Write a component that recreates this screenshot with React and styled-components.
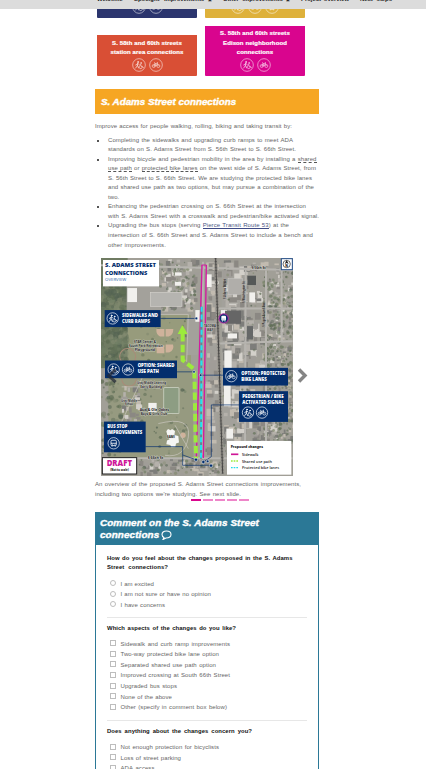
import React from "react";
import styled, { createGlobalStyle } from "styled-components";

const Global = createGlobalStyle`
  * { box-sizing: border-box; }
  html, body { margin: 0; padding: 0; background: #fff; overflow: hidden; }
  body { font-family: "Liberation Sans", Arial, sans-serif; font-size: 6px; color: #666; }
`;

const Page = styled.div`
  width: 426px;
  height: 769px;
  overflow: hidden;
`;

const NavBar = styled.nav`
  height: 9px;
  background: #dcdcdc;
  display: flex;
  gap: 11px;
  padding-left: 97px;
  overflow: hidden;
`;

const NavItem = styled.span`
  flex: none;
  width: ${(p) => p.$w}px;
  height: 8px;
  margin-top: -5px;
  font: 700 5.9px/8px "Liberation Sans", Arial, sans-serif;
  color: #222;
  white-space: nowrap;
  text-align: justify;
  text-align-last: justify;
`;

const NavMark = styled.span`
  font-size: 4px;
  font-weight: 400;
`;

const Cards = styled.div`
  margin-left: 97px;
  width: 208px;
  display: grid;
  grid-template-columns: 100px 100px;
  column-gap: 8px;
  row-gap: 8px;
  grid-template-rows: 9px 50px;
  align-items: end;
`;

const Card = styled.div`
  height: ${(p) => p.$h}px;
  background: ${(p) => p.$bg};
  border-radius: 0 0 1px 1px;
  display: flex;
  flex-direction: column;
  align-items: center;
  justify-content: flex-end;
  padding-bottom: 4px;
  overflow: hidden;
`;

const CardTitle = styled.div`
  color: #fff;
  font: 700 6px/9.6px "Liberation Sans", Arial, sans-serif;
  letter-spacing: 0.1px;
  -webkit-text-stroke: 0.2px #fff;
  text-align: center;
  white-space: pre;
`;

const IconRow = styled.div`
  display: flex;
  gap: 3px;
  height: 14px;
`;

const Main = styled.main`
  margin: 13px 0 0 95px;
  width: 224px;
`;

const Heading = styled.h2`
  margin: 0;
  height: 25px;
  padding-left: 6px;
  background: #f6a623;
  color: #fff;
  font: italic 700 9.8px/26px "Liberation Sans", Arial, sans-serif;
  -webkit-text-stroke: 0.4px #fff;
`;

const Line = styled.div`
  width: ${(p) => p.$w}px;
  height: ${(p) => p.$h ?? 9.55}px;
  line-height: ${(p) => p.$h ?? 9.55}px;
  letter-spacing: ${(p) => p.$ls ?? 0.07}px;
  white-space: nowrap;
  text-align: justify;
  text-align-last: justify;
`;

const Intro = styled.div`
  margin-top: 8px;
`;

const List = styled.ul`
  list-style: none;
  margin: 4px 0 0;
  padding: 0 0 0 13px;
`;

const Item = styled.li`
  &::before {
    content: "";
    float: left;
    width: 2px;
    height: 2px;
    margin: 4px 0 0 -11px;
    background: #555;
  }
`;

const Term = styled.span`
  border-bottom: 1px dashed #555;
`;

const RouteLink = styled.a`
  color: #4c5783;
  border-bottom: 1px solid #3f4b85;
`;

const Carousel = styled.div`
  display: flex;
  align-items: center;
  gap: 4px;
  margin: 8px 0 0 6px;
  height: 218px;
`;

const NextArrow = styled.svg`
  margin-top: 17px;
`;

const Caption = styled.div`
  margin-top: 4px;
`;

const Dots = styled.div`
  display: flex;
  gap: 2px;
  padding-left: 96px;
`;

const Dot = styled.span`
  width: 10px;
  height: 2px;
  background: ${(p) => (p.$on ? "#da078e" : "#ee86c9")};
`;

const FormBox = styled.section`
  margin-top: 11px;
  border: 1px solid #2b7896;
  height: 270px;
`;

const FormTitle = styled.h3`
  margin: 0;
  height: 32px;
  padding: 4px 0 0 4px;
  background: #2b7896;
  color: #fff;
  font: italic 700 9.9px/12px "Liberation Sans", Arial, sans-serif;
  letter-spacing: 0.1px;
  -webkit-text-stroke: 0.4px #fff;
  white-space: nowrap;
`;

const TitleRow = styled.div`
  display: flex;
  align-items: center;
  gap: 2px;
  height: 12px;
`;

const Group = styled.div`
  margin: 0 11px;
  padding-top: ${(p) => p.$pt}px;
  padding-bottom: 7px;
  border-bottom: 1px solid #e7e7e7;
`;

const Question = styled.div`
  color: #111;
  font: 700 5.9px/9px "Liberation Sans", Arial, sans-serif;
  margin-bottom: ${(p) => p.$mb}px;
`;

const Option = styled.label`
  display: flex;
  align-items: center;
  height: 10.67px;
  padding-left: 3px;
  gap: 4.5px;
`;

const Box = styled.span`
  flex: none;
  width: 6px;
  height: 6px;
  margin-top: -1px;
  border: 1px solid #bdbdbd;
  border-radius: ${(p) => (p.$round ? "50%" : "0")};
`;

function Walker() {
  return (
    <g fill="none" stroke="#fff" strokeWidth="2.3" strokeLinecap="round" strokeLinejoin="round">
      <circle cx="-3" cy="-9" r="1.4" fill="#fff" />
      <path d="M-4 -5 L-5 2 L-10 9 M-5 1 L-1 9 M-4 -4 L-10 0 M-3 -4 L1 -1" />
      <circle cx="6" cy="-6" r="1" fill="#fff" />
      <path d="M5 -2 L6 4 H10 L13 8 M2 2 A5 5 0 1 0 10 7" />
    </g>
  );
}

function Bike() {
  return (
    <g fill="none" stroke="#fff" strokeWidth="1.9" strokeLinejoin="round">
      <circle cx="-7" cy="3" r="4.5" />
      <circle cx="7" cy="3" r="4.5" />
      <path d="M-7 3 L-3 -4 H4 L0 3 H-7 M0 3 L-4 -7 H-6 M7 3 L3 -7 H6" />
    </g>
  );
}

function Bus() {
  return (
    <g fill="none" stroke="#fff" strokeWidth="2.4">
      <rect x="-8" y="-9" width="16" height="16" rx="3" />
      <path d="M-8 0 H8 M-5 7 V10 M5 7 V10 M-5 4 H-3 M3 4 H5" />
    </g>
  );
}

const glyphs = { walk: Walker, bike: Bike, bus: Bus };

function Badge({ kind, x, y, r = 17 }) {
  const Glyph = glyphs[kind];
  return (
    <g transform={`translate(${x} ${y})`}>
      <circle r={r} fill="none" stroke="#fff" strokeWidth="2" />
      <Glyph />
    </g>
  );
}

function CardIcon({ kind }) {
  return (
    <svg width="14" height="14" viewBox="-21 -21 42 42" opacity="0.8">
      <Badge kind={kind} x={0} y={0} r={19} />
    </svg>
  );
}

function random(seed) {
  let s = seed;
  return () => {
    s = (s * 16807) % 2147483647;
    return s / 2147483647;
  };
}

function scatter(seed, n, x, y, w, h) {
  const r = random(seed * 7919);
  return Array.from({ length: n }, () => ({ x: x + r() * w, y: y + r() * h, a: r(), b: r(), c: r() }));
}

const pick = (list, v) => list[Math.floor(v * list.length)];
const greens = ["#65735a", "#728066", "#5b6a51", "#858c72", "#556453"];
const roofs = ["#a09d98", "#b5b1ab", "#d3d0ca", "#8b8883", "#c2bbb0", "#7d7d7a"];

function Trees({ seed, n, area, size = 7 }) {
  return scatter(seed, n, ...area).map((t, i) => (
    <circle key={i} cx={t.x} cy={t.y} r={size * (0.4 + t.a * 0.7)} fill={pick(greens, t.b)} opacity={0.4 + t.c * 0.35} />
  ));
}

function Roofs({ seed, n, area, size = 9 }) {
  return scatter(seed, n, ...area).map((t, i) => (
    <rect key={i} x={t.x} y={t.y} width={size * (0.5 + t.a)} height={size * (0.5 + t.c)} fill={pick(roofs, t.b)} />
  ));
}

function Label({ x, y, w, size = 13, weight = 800, fill = "#fff", children }) {
  return (
    <text x={x} y={y} textLength={w} lengthAdjust="spacingAndGlyphs" fontFamily="Open Sans, sans-serif" fontWeight={weight} fontSize={size} fill={fill}>
      {children}
    </text>
  );
}

function Place({ x, y, w, children }) {
  return (
    <text x={x} y={y} textLength={w} lengthAdjust="spacingAndGlyphs" fontFamily="Open Sans, sans-serif" fontWeight="700" fontSize="9.5" fill="#222" stroke="#e4e4e0" strokeWidth="1.4" paintOrder="stroke">
      {children}
    </text>
  );
}

function StreetMap() {
  const navy = "#032e6d";
  return (
    <svg width="192" height="218" viewBox="18 9 576 653" preserveAspectRatio="none">
      <rect x="18" y="9" width="576" height="653" fill="#a19f97" />
      <rect x="18" y="9" width="80" height="330" fill="#6f7b62" />
      <rect x="98" y="180" width="190" height="160" fill="#979b7c" />
      <rect x="40" y="340" width="255" height="270" fill="#969a80" />
      <Trees seed={71} n={300} area={[20, 80, 75, 250]} size={10} />
      <Trees seed={72} n={80} area={[18, 340, 60, 260]} size={7} />
      <Trees seed={73} n={80} area={[130, 185, 145, 410]} size={5} />
      <g fill="#a3a19b">
        <rect x="95" y="85" width="205" height="85" />
        <rect x="335" y="20" width="30" height="580" />
        <rect x="380" y="30" width="70" height="600" />
        <rect x="275" y="190" width="35" height="110" />
      </g>
      <Roofs seed={31} n={70} area={[195, 12, 105, 150]} size={13} />
      <Roofs seed={32} n={65} area={[330, 20, 30, 570]} size={16} />
      <Roofs seed={33} n={150} area={[380, 15, 70, 600]} size={17} />
      <Roofs seed={34} n={120} area={[450, 20, 60, 560]} size={15} />
      <Roofs seed={35} n={240} area={[515, 25, 78, 540]} size={9} />
      <Trees seed={36} n={380} area={[505, 45, 88, 520]} size={5} />
      <Trees seed={37} n={80} area={[385, 30, 120, 570]} size={4} />
      <Trees seed={38} n={80} area={[190, 20, 110, 145]} size={5} />
      <Roofs seed={39} n={60} area={[130, 610, 240, 45]} size={12} />
      <Roofs seed={40} n={55} area={[75, 390, 60, 190]} size={12} />
      <Trees seed={41} n={50} area={[130, 610, 250, 45]} size={5} />
      <g fill="#f1f0ed">
        <rect x="97" y="99" width="29" height="42" />
        <rect x="240" y="52" width="20" height="10" />
        <rect x="240" y="80" width="18" height="12" />
        <rect x="160" y="443" width="25" height="27" />
        <rect x="301" y="165" width="13" height="35" />
        <rect x="334" y="58" width="16" height="38" />
        <rect x="378" y="165" width="18" height="15" />
        <rect x="463" y="112" width="17" height="30" />
        <rect x="388" y="286" width="22" height="58" />
        <rect x="387" y="390" width="20" height="63" />
        <rect x="394" y="520" width="20" height="30" />
        <rect x="398" y="235" width="28" height="15" />
      </g>
      <rect x="166" y="112" width="95" height="42" fill="#b5b4b0" stroke="#d2d0cb" strokeWidth="2" />
      <rect x="399" y="70" width="43" height="48" fill="#b0aeaa" stroke="#d5d5d5" />
      <rect x="390" y="167" width="48" height="39" fill="#666" />
      <rect x="457" y="62" width="26" height="28" fill="#555858" />
      <rect x="456" y="213" width="18" height="40" fill="#666868" />
      <g fill="#cfb29b">
        <path d="M184 222 h24 v22 h-13 q-12 -5 -11 -22 M212 222 h23 q0 18 -14 22 h-9 M184 270 h24 v24 h-23 M212 268 h22 q5 15 -11 24 h-11" />
        <circle cx="264" cy="540" r="8" />
      </g>
      <circle cx="98" cy="304" r="24" fill="none" stroke="#a98b78" strokeWidth="3" />
      <circle cx="102" cy="371" r="22" fill="none" stroke="#a98b78" strokeWidth="3" />
      <rect x="206" y="397" width="46" height="78" rx="3" fill="#8d9d83" stroke="#c1c7b6" strokeWidth="3" />
      <path d="M214 528 l5 -7 8 4 4 -4 9 6 -2 12 12 3 2 20 -9 3 -2 10 -12 1 -3 -7 -12 -2 2 -11 8 -4 -6 -8 Z" fill="#f6f6f4" />
      <g fill="none" stroke="#c2bfb4" strokeWidth="2.5">
        <path d="M80 395 H200 M150 350 L80 500 M190 505 Q290 480 280 545 T210 600 M240 510 L280 580 M95 178 H280 L275 320" />
      </g>
      <g fill="none" stroke="#b7b5b0" strokeWidth="6">
        <path d="M18 31 L593 45 M370 160 H593 M375 265 L593 258 M18 609 H593 M452 45 L450 600 M513 42 V560 M324 20 L320 600 M560 45 V260" />
      </g>
      <path d="M362 9 L383 655" stroke="#99968f" strokeWidth="10" />
      <path d="M362 9 L383 655" stroke="#2d2d2d" strokeWidth="2.4" />
      <path d="M362 9 L383 655" stroke="#444" strokeWidth="7" strokeDasharray="1.2 8" />

      <g fill="none">
        <path d="M321 30 L304 608" stroke="#d319a0" strokeWidth="4" />
        <path d="M334 30 L325 608" stroke="#d319a0" strokeWidth="4" />
        <path d="M320 30 H334" stroke="#d319a0" strokeWidth="3" />
        <path d="M320 155 L318 610" stroke="#5e8894" strokeWidth="6" />
        <path d="M320 155 L318 610" stroke="#25e1ee" strokeWidth="6" strokeDasharray="15 8" />
        <path d="M263 237 V315 L298 342 L303 610" stroke="#9ceb3c" strokeWidth="12" strokeDasharray="22 10" />
      </g>
      <path d="M262 210 L278 237 H248 Z" fill="#9ceb3c" />

      <g fill="none" stroke={navy} strokeWidth="2">
        <path d="M196 190 H304 M245 350 H296 M384 360 H318 M432 449 H349 V604 L326 620 M151 574 H263 V630 H344 M263 599 L302 613" />
      </g>
      <g fill={navy} stroke="#fff" strokeWidth="1.5">
        <circle cx="304" cy="190" r="4" />
        <circle cx="297" cy="350" r="4" />
        <circle cx="317" cy="360" r="4" />
        <circle cx="303" cy="613" r="5" />
        <circle cx="325" cy="620" r="5" />
        <circle cx="338" cy="618" r="4" />
        <circle cx="348" cy="631" r="5" />
      </g>

      <Place x={117} y={265} w={66}>STAR Center &amp;</Place>
      <Place x={102} y={277} w={101}>South Park Recreation</Place>
      <Place x={119} y={289} w={61}>Playground</Place>
      <Place x={126} y={387} w={87}>Gray Middle Learning</Place>
      <Place x={136} y={398} w={65}>Early Building</Place>
      <Place x={78} y={439} w={48}>Gray Middle</Place>
      <Place x={90} y={450} w={25}>School</Place>
      <Place x={134} y={466} w={88}>Asia &amp; Ole Oakes</Place>
      <Place x={137} y={478} w={80}>Boys &amp; Girls Club</Place>
      <Place x={216} y={548} w={23}>SAMI</Place>
      <Place x={158} y={612} w={47}>S 66th St</Place>
      <Place x={470} y={41} w={42}>S 56th St</Place>
      <Place x={327} y={217} w={36}>TACOMA</Place>
      <Place x={335} y={228} w={20}>WAY</Place>
      <g fontFamily="Open Sans, sans-serif" fontWeight="700" fontSize="8" fill="#333">
        <text transform="translate(394 132) rotate(-90)">S Adams Street</text>
        <text transform="translate(451 143) rotate(-90)">S Washington St</text>
        <text transform="translate(511 215) rotate(-90)">S Puget Sound Ave</text>
      </g>

      <rect x="24" y="15" width="168" height="79" fill="#fff" />
      <Label x={30} y={37} w={153} size={17.5} fill={navy}>S. ADAMS STREET</Label>
      <Label x={30} y={60} w={127} size={17.5} fill={navy}>CONNECTIONS</Label>
      <Label x={30} y={79} w={64} size={11} weight={400} fill="#3468a4">OVERVIEW</Label>

      <rect x="559" y="11" width="33" height="33" fill="#fff" stroke="#244f8b" strokeWidth="3" />
      <circle cx="575" cy="27" r="11" fill="none" stroke="#222" strokeWidth="2" />
      <path d="M575 15 L569 27 L575 24 L581 27 Z" fill="#222" />
      <Label x={571} y={36} w={8} size={11} fill="#222">N</Label>

      <circle cx="386" cy="190" r="14" fill={navy} stroke="#b42aa1" strokeWidth="3" />
      <rect x="379" y="182" width="14" height="14" rx="3" fill="#fff" />
      <path d="M382 196 v3 M390 196 v3" stroke="#fff" strokeWidth="3" />
      <path d="M381 192 h10" stroke={navy} strokeWidth="1" />

      <g fill={navy}>
        <rect x="29" y="165" width="168" height="51" />
        <rect x="30" y="316" width="216" height="53" />
        <rect x="27" y="499" width="125" height="92" />
        <rect x="384" y="338" width="195" height="53" />
        <rect x="432" y="408" width="147" height="92" />
      </g>
      <Badge kind="walk" x={53} y={190} />
      <Label x={81} y={186} w={108}>SIDEWALKS AND</Label>
      <Label x={81} y={203} w={84}>CURB RAMPS</Label>
      <Badge kind="walk" x={56} y={343} />
      <Badge kind="bike" x={99} y={343} />
      <Label x={128} y={337} w={110}>OPTION: SHARED</Label>
      <Label x={128} y={354} w={64}>USE PATH</Label>
      <Badge kind="bike" x={409} y={363} />
      <Label x={439} y={360} w={132}>OPTION: PROTECTED</Label>
      <Label x={439} y={377} w={76}>BIKE LANES</Label>
      <Label x={442} y={428} w={124}>PEDESTRIAN / BIKE</Label>
      <Label x={442} y={445} w={125}>ACTIVATED SIGNAL</Label>
      <Badge kind="walk" x={459} y={472} />
      <Badge kind="bike" x={501} y={472} />
      <Label x={37} y={518} w={60}>BUS STOP</Label>
      <Label x={37} y={535} w={105}>IMPROVEMENTS</Label>
      <Badge kind="bus" x={56} y={564} />
      <path d="M62 343 L41 362 L62 381" fill="none" stroke="#242a37" strokeWidth="9" opacity="0.75" />

      <rect x="22" y="607" width="103" height="49" fill="#fff" stroke="#222" strokeWidth="3" />
      <Label x={35} y={633} w={76} size={25} fill="#ce1699">DRAFT</Label>
      <Label x={46} y={647} w={55} size={9} fill="#222">(Not to scale)</Label>
      <rect x="396" y="557" width="193" height="101" fill="#fff" />
      <Label x={407} y={579} w={97} size={12} fill="#222">Proposed changes</Label>
      <path d="M408 597 H430" stroke="#cf1697" strokeWidth="5" />
      <path d="M408 617 H430" stroke="#9ceb3c" strokeWidth="4" strokeDasharray="5 3" />
      <path d="M408 637 H430" stroke="#25dce9" strokeWidth="4" strokeDasharray="5 3" />
      <Label x={441} y={602} w={49} size={12} weight={600} fill="#222">Sidewalk</Label>
      <Label x={441} y={622} w={90} size={12} weight={600} fill="#222">Shared use path</Label>
      <Label x={441} y={641} w={111} size={12} weight={600} fill="#222">Protected bike lanes</Label>
    </svg>
  );
}

function Choices({ items, round }) {
  return items.map(([text, w]) => (
    <Option key={text}>
      <Box $round={round} />
      <Line $w={w} $h={10}>{text}</Line>
    </Option>
  ));
}

const nav = [
  ["Welcome", 26],
  ["Spotlight improvements", 78, true],
  ["Other improvements", 67, true],
  ["Project overview", 48],
  ["Next steps", 32],
];

const feelings = [["I am excited", 33.5], ["I am not sure or have no opinion", 90.5], ["I have concerns", 44.5]];
const likes = [
  ["Sidewalk and curb ramp improvements", 109.5],
  ["Two-way protected bike lane option", 98.5],
  ["Separated shared use path option", 95.5],
  ["Improved crossing at South 66th Street", 109.5],
  ["Upgraded bus stops", 56.5],
  ["None of the above", 51.5],
  ["Other (specify in comment box below)", 106.5],
];
const concerns = [["Not enough protection for bicyclists", 98.5], ["Loss of street parking", 60.5], ["ADA access", 34]];

export default function App() {
  return (
    <Page>
      <Global />
      <NavBar>
        {nav.map(([t, w, menu]) => (
          <NavItem key={t} $w={w}>{t}{menu && <NavMark> ▣</NavMark>}</NavItem>
        ))}
      </NavBar>
      <Cards>
        <Card $h={9} $bg="#2b356e">
          <IconRow><CardIcon kind="walk" /><CardIcon kind="bike" /></IconRow>
        </Card>
        <Card $h={9} $bg="#deb13b">
          <IconRow><CardIcon kind="walk" /><CardIcon kind="bike" /><CardIcon kind="bus" /></IconRow>
        </Card>
        <Card $h={41} $bg="#d94f35">
          <CardTitle>{"S. 58th and 60th streets\nstation area connections"}</CardTitle>
          <IconRow><CardIcon kind="walk" /><CardIcon kind="bike" /></IconRow>
        </Card>
        <Card $h={50} $bg="#d9058e">
          <CardTitle>{"S. 58th and 60th streets\nEdison neighborhood\nconnections"}</CardTitle>
          <IconRow><CardIcon kind="walk" /><CardIcon kind="bike" /></IconRow>
        </Card>
      </Cards>
      <Main>
        <Heading>S. Adams Street connections</Heading>
        <Intro><Line $w={197}>Improve access for people walking, rolling, biking and taking transit by:</Line></Intro>
        <List>
          <Item>
            <Line $w={185}>Completing the sidewalks and upgrading curb ramps to meet ADA</Line>
            <Line $w={188}>standards on S. Adams Street from S. 56th Street to S. 66th Street.</Line>
          </Item>
          <Item>
            <Line $w={208.5}>Improving bicycle and pedestrian mobility in the area by installing a <Term>shared</Term></Line>
            <Line $w={208}><Term>use path</Term> or <Term>protected bike lanes</Term> on the west side of S. Adams Street, from</Line>
            <Line $w={204}>S. 56th Street to S. 66th Street. We are studying the protected bike lanes</Line>
            <Line $w={206}>and shared use path as two options, but may pursue a combination of the</Line>
            <Line $w={11.5}>two.</Line>
          </Item>
          <Item>
            <Line $w={198}>Enhancing the pedestrian crossing on S. 66th Street at the intersection</Line>
            <Line $w={211}>with S. Adams Street with a crosswalk and pedestrian/bike activated signal.</Line>
          </Item>
          <Item>
            <Line $w={181}>Upgrading the bus stops (serving <RouteLink>Pierce Transit Route 53</RouteLink>) at the</Line>
            <Line $w={205}>intersection of S. 66th Street and S. Adams Street to include a bench and</Line>
            <Line $w={58} $ls={0.16}>other improvements.</Line>
          </Item>
        </List>
        <Carousel>
          <StreetMap />
          <NextArrow width="11" height="15" viewBox="0 0 11 15">
            <path d="M2 1.5 L8 7.5 L2 13.5" fill="none" stroke="#858585" strokeWidth="3.4" />
          </NextArrow>
        </Carousel>
        <Caption>
          <Line $w={206}>An overview of the proposed S. Adams Street connections improvements,</Line>
          <Line $w={146}>including two options we're studying. See next slide.</Line>
        </Caption>
        <Dots><Dot $on /><Dot /><Dot /><Dot /><Dot /></Dots>
        <FormBox>
          <FormTitle>
            <TitleRow>Comment on the S. Adams Street</TitleRow>
            <TitleRow>
              connections
              <svg width="11" height="10" viewBox="0 0 22 20">
                <path d="M11 2 C5 2 2 5 2 9 C2 12 4 14 6 15 L4 19 L10 16 C17 16 20 13 20 9 C20 5 17 2 11 2 Z" fill="none" stroke="#fff" strokeWidth="2.2" />
              </svg>
            </TitleRow>
          </FormTitle>
          <Group $pt={9}>
            <Question $mb={6}>
              <Line $w={185.5} $h={9}>How do you feel about the changes proposed in the S. Adams</Line>
              <Line $w={61} $h={9} $ls={0.12}>Street connections?</Line>
            </Question>
            <Choices items={feelings} round />
          </Group>
          <Group $pt={6}>
            <Question $mb={5}><Line $w={129} $h={9}>Which aspects of the changes do you like?</Line></Question>
            <Choices items={likes} />
          </Group>
          <Group $pt={6}>
            <Question $mb={6}><Line $w={145} $h={9}>Does anything about the changes concern you?</Line></Question>
            <Choices items={concerns} />
          </Group>
        </FormBox>
      </Main>
    </Page>
  );
}
